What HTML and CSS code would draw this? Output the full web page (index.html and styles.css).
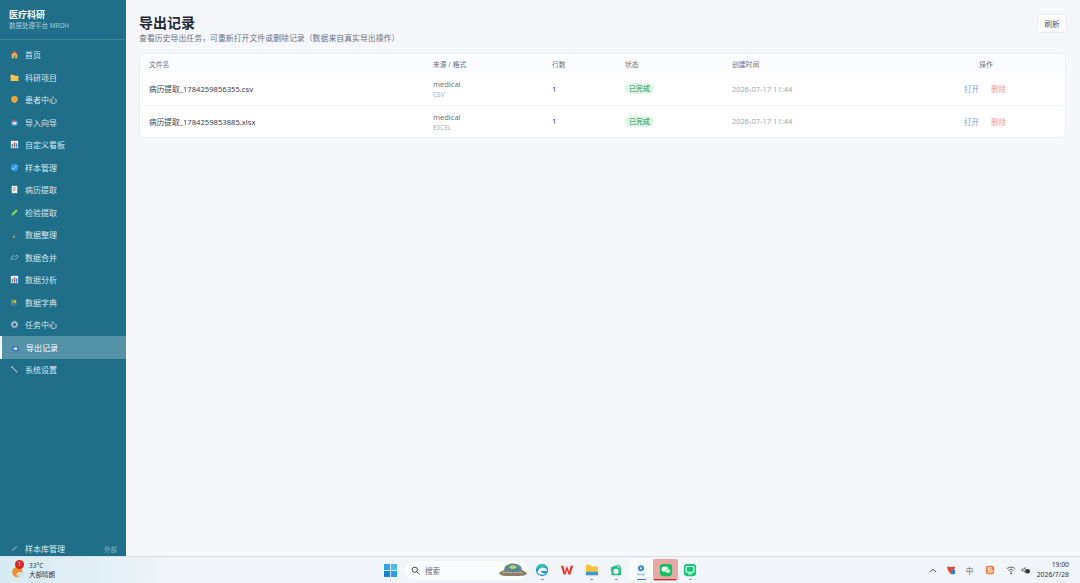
FILE: index.html
```html
<!DOCTYPE html>
<html lang="zh-CN">
<head>
<meta charset="utf-8">
<title>导出记录</title>
<link rel="stylesheet" href="styles.css">
</head>
<body>
<div class="app">
  <aside class="sidebar">
    <header class="brand">
      <div class="brand-name">医疗科研</div>
      <div class="brand-sub">数据处理平台 MRDH</div>
    </header>
    <nav class="nav">
      <a class="nav-item"><svg class="nav-icon" viewBox="0 0 16 16"><path d="M8 1.500 14.500 8H13v6.500H3V8H1.500z" fill="#e9b36a"/><path d="M8 1.500 14.500 8H12L8 4 4 8H1.500z" fill="#c9503f"/><rect x="6.500" y="9.500" width="3" height="5" fill="#5a8f4c"/></svg>首页</a>
      <a class="nav-item"><svg class="nav-icon" viewBox="0 0 16 16"><path d="M1 3h5.500l1.500 2h7v9H1z" fill="#f6c343"/></svg>科研项目</a>
      <a class="nav-item"><svg class="nav-icon" viewBox="0 0 16 16"><path d="M8 1.500 13.500 3.500v5c0 3-2.500 5-5.500 6-3-1-5.500-3-5.500-6v-5z" fill="#f2a93b"/><path d="M6 8h4M8 6v4" stroke="#e58a2c" stroke-width="1.300"/></svg>患者中心</a>
      <a class="nav-item"><svg class="nav-icon" viewBox="0 0 16 16"><rect x="2" y="4" width="12" height="10" rx="3" fill="#2f8fd8"/><rect x="4.500" y="6.500" width="7" height="5" rx="1.500" fill="#dfeef8"/><path d="M8 2v5M6 5l2 2.500L10 5" stroke="#e2574c" stroke-width="1.500" fill="none"/></svg>导入向导</a>
      <a class="nav-item"><svg class="nav-icon" viewBox="0 0 16 16"><rect x="1.500" y="1.500" width="13" height="13" fill="#e8f0f4"/><rect x="3" y="7" width="2.500" height="6.500" fill="#3aa76d"/><rect x="6.800" y="4" width="2.500" height="9.500" fill="#d9487d"/><rect x="10.500" y="6" width="2.500" height="7.500" fill="#3f86d8"/></svg>自定义看板</a>
      <a class="nav-item"><svg class="nav-icon" viewBox="0 0 16 16"><circle cx="8" cy="8" r="6.500" fill="#2e9be6"/><path d="M4 10.500c3-.5 5.500-2.500 8-5.500" stroke="#d9eefb" stroke-width="1.400" fill="none"/></svg>样本管理</a>
      <a class="nav-item"><svg class="nav-icon" viewBox="0 0 16 16"><rect x="3" y="1.500" width="10" height="13" fill="#eef1f3"/><path d="M5 5h6M5 7.500h6M5 10h4" stroke="#b07a5a" stroke-width="1"/></svg>病历提取</a>
      <a class="nav-item"><svg class="nav-icon" viewBox="0 0 16 16"><path d="M11 2l3 3-8 8-3.500.5L3 10z" fill="#8fd14f"/><path d="M3 10l3 3-3.500.5z" fill="#3d9b5c"/></svg>检验提取</a>
      <a class="nav-item"><svg class="nav-icon" viewBox="0 0 16 16"><path d="M12 5 8 10" stroke="#8a6a3a" stroke-width="1"/><path d="M8 9.500l1.500 1.500-2.500 3H4.500z" fill="#e8a33a"/></svg>数据整理</a>
      <a class="nav-item"><svg class="nav-icon" viewBox="0 0 16 16" fill="none" stroke="#b9cfd8" stroke-width="1.300"><path d="M7 9.500 5.500 11a2 2 0 0 1-3-3L5 5.500a2 2 0 0 1 3 0"/><path d="M9 6.500 10.500 5a2 2 0 0 1 3 3L11 10.500a2 2 0 0 1-3 0"/></svg>数据合并</a>
      <a class="nav-item"><svg class="nav-icon" viewBox="0 0 16 16"><rect x="1.500" y="1.500" width="13" height="13" fill="#e8f0f4"/><rect x="3" y="7" width="2.500" height="6.500" fill="#3aa76d"/><rect x="6.800" y="4" width="2.500" height="9.500" fill="#d9487d"/><rect x="10.500" y="6" width="2.500" height="7.500" fill="#3f86d8"/></svg>数据分析</a>
      <a class="nav-item"><svg class="nav-icon" viewBox="0 0 16 16"><rect x="2" y="2.500" width="5" height="10" fill="#57a84a"/><rect x="7" y="3.500" width="4" height="10" fill="#e2b23a"/><rect x="5" y="9" width="6" height="5" fill="#3c6fd0"/></svg>数据字典</a>
      <a class="nav-item"><svg class="nav-icon" viewBox="0 0 16 16"><circle cx="8" cy="8" r="4.300" fill="none" stroke="#a9bccb" stroke-width="3"/><circle cx="8" cy="8" r="6" fill="none" stroke="#a9bccb" stroke-width="1.400" stroke-dasharray="2 2"/></svg>任务中心</a>
      <a class="nav-item nav-item-active"><svg class="nav-icon" viewBox="0 0 16 16"><rect x="2.500" y="5.500" width="11" height="9" rx="1.500" fill="#2f78c4"/><rect x="5" y="8" width="6" height="4" fill="#dfeef8"/><path d="M8 1.500v5" stroke="#e2574c" stroke-width="2"/></svg>导出记录</a>
      <a class="nav-item"><svg class="nav-icon" viewBox="0 0 16 16"><path d="M3 3l3 3 7 7" stroke="#b5c5cc" stroke-width="1.800" fill="none"/><path d="M2 5l3-3" stroke="#b5c5cc" stroke-width="1.500"/></svg>系统设置</a>
    </nav>
    <footer class="side-foot">
      <svg class="nav-icon" viewBox="0 0 16 16"><path d="M11 3l2 2-7 7-3 1 1-3z" fill="#7f93a8"/></svg>
      <span class="side-foot-label">样本库管理</span>
      <span class="side-foot-tag">外部</span>
    </footer>
  </aside>

  <main class="main">
    <div class="page-head">
      <div>
        <h1 class="page-title">导出记录</h1>
        <p class="page-sub">查看历史导出任务，可重新打开文件或删除记录（数据来自真实导出操作）</p>
      </div>
      <button class="refresh">刷新</button>
    </div>
    <div class="card">
      <table class="table">
        <colgroup>
          <col class="c-file"><col class="c-src"><col class="c-rows"><col class="c-state"><col class="c-time"><col class="c-ops"><col>
        </colgroup>
        <thead>
          <tr><th>文件名</th><th>来源 / 格式</th><th>行数</th><th>状态</th><th>创建时间</th><th class="th-ops">操作</th><th></th></tr>
        </thead>
        <tbody>
          <tr>
            <td class="file">病历提取_1784259856355.csv</td>
            <td><div class="src">medical</div><div class="fmt">CSV</div></td>
            <td class="rows">1</td>
            <td><span class="badge">已完成</span></td>
            <td class="time">2026-07-17 11:44</td>
            <td class="ops"><a class="op-open">打开</a><a class="op-del">删除</a></td>
            <td></td>
          </tr>
          <tr>
            <td class="file">病历提取_1784259853885.xlsx</td>
            <td><div class="src">medical</div><div class="fmt">EXCEL</div></td>
            <td class="rows">1</td>
            <td><span class="badge">已完成</span></td>
            <td class="time">2026-07-17 11:44</td>
            <td class="ops"><a class="op-open">打开</a><a class="op-del">删除</a></td>
            <td></td>
          </tr>
        </tbody>
      </table>
    </div>
  </main>
</div>

<div class="taskbar">
  <div class="weather">
    <span class="weather-icon">
      <svg viewBox="0 0 20 20" width="16" height="16"><circle cx="8" cy="10" r="6.500" fill="#f0912c"/><ellipse cx="12" cy="13" rx="5" ry="3" fill="#d8dfe8"/></svg>
      <span class="weather-badge">1</span>
    </span>
    <div class="weather-text"><div>33°C</div><div>大部晴朗</div></div>
  </div>
  <div class="task-center">
    <svg class="start" viewBox="0 0 14 14"><rect width="6.500" height="6.500" fill="#2ea4ea"/><rect x="7.500" width="6.500" height="6.500" fill="#47b8f0"/><rect y="7.500" width="6.500" height="6.500" fill="#1583d8"/><rect x="7.500" y="7.500" width="6.500" height="6.500" fill="#2b9ce6"/></svg>
    <div class="search">
      <svg class="search-icon" viewBox="0 0 12 12" fill="none" stroke="#333" stroke-width="1.200"><circle cx="5" cy="5" r="3.500"/><path d="M7.500 7.500 11 11"/></svg>
      <span class="search-text">搜索</span>
      <svg class="search-art" viewBox="0 0 28 14"><path d="M0 10c2-2 4-2 5-3 1-4 5-6.500 9-6.500S22 3 23 7c1 1 3 1 5 3-1 3-4 3-14 3S1 13 0 10z" fill="#8d8069"/><ellipse cx="14" cy="5" rx="8.500" ry="4" fill="#4f8c9a"/><ellipse cx="14" cy="4" rx="3.500" ry="1.800" fill="#d9c770"/><path d="M4 9.500h20" stroke="#d0c4a8" stroke-width="1.200" stroke-dasharray="1.500 1"/></svg>
    </div>
    <div class="apps">
      <span class="app-slot"><svg viewBox="0 0 16 16"><circle cx="8" cy="8" r="7" fill="#1d8fd0"/><path d="M3 11c0-4 3-6 6-6 3 0 5 2 5 4H7c0 2 3 3.500 6 2-2 3-8 3.500-10 0z" fill="#eaf6fb"/><path d="M1.500 8C2 4 5 1 8 1c3.500 0 6 2 6.500 5-2-2.500-9-3-13 2z" fill="#36c2a6"/></svg><i class="dot"></i></span>
      <span class="app-slot"><svg viewBox="0 0 16 16"><path d="M1 3h3l1.500 7L8 3l2.500 7L12 3h3l-3 10H9.500L8 8l-1.500 5H4z" fill="#e33b2e"/></svg></span>
      <span class="app-slot"><svg viewBox="0 0 16 16"><path d="M1 2h5l1.500 2H15v10H1z" fill="#f5c33b"/><rect x="1" y="10" width="14" height="4" fill="#3d9ad6"/></svg><i class="dot"></i></span>
      <span class="app-slot"><svg viewBox="0 0 16 16"><path d="M2 5 11 1.500l3 4V14H3z" fill="#2fb889"/><circle cx="8" cy="9.500" r="3" fill="#eaf8f2"/><path d="M9 2 12 6" stroke="#fff"/></svg><i class="dot"></i></span>
      <span class="app-slot app-slot-open"><svg viewBox="0 0 16 16"><circle cx="8" cy="6" r="3.500" fill="#3b8ad0"/><path d="M3 11c2 2.500 8 2.500 10 0l-1 3H4z" fill="#7fb6e2"/><circle cx="8" cy="6" r="1.200" fill="#eaf4fb"/></svg><i class="bar-blue"></i></span>
      <span class="app-slot app-slot-active"><svg viewBox="0 0 16 16"><rect x="1" y="1" width="14" height="14" rx="3.500" fill="#12c15f"/><ellipse cx="6.800" cy="7" rx="3.800" ry="3.100" fill="#fff"/><ellipse cx="10" cy="9.200" rx="3" ry="2.400" fill="#fff" stroke="#12c15f" stroke-width=".7"/></svg><i class="bar-red"></i></span>
      <span class="app-slot"><svg viewBox="0 0 16 16"><rect x="1" y="1" width="14" height="14" rx="3.500" fill="#14c777"/><rect x="3.500" y="4" width="9" height="6.500" rx="1" fill="none" stroke="#fff" stroke-width="1.200"/><path d="M6 12.500h4" stroke="#fff" stroke-width="1.200"/></svg><i class="dot"></i></span>
    </div>
  </div>
  <div class="tray">
    <svg class="tray-chev" viewBox="0 0 10 6" fill="none" stroke="#333" stroke-width="1.100"><path d="M1 5 5 1.500 9 5"/></svg>
    <svg class="tray-icon" viewBox="0 0 12 12"><path d="M1 2h10L9.500 7 6 11 2.500 7z" fill="#dd4a3e"/><rect x="6" y="6" width="5" height="5" rx="1" fill="#2f7fd4"/></svg>
    <span class="tray-ime">中</span>
    <svg class="tray-icon tray-sogou" viewBox="0 0 12 12"><rect x="1" y="1" width="10" height="10" rx="2.500" fill="#ef7a3a"/><path d="M8.500 3.500h-5V6h5v2.500h-5" fill="none" stroke="#fff" stroke-width="1.200"/></svg>
    <svg class="tray-icon tray-wifi" viewBox="0 0 12 12" fill="none" stroke="#444" stroke-width="1"><path d="M1 4.500c3-2.500 7-2.500 10 0M3 6.500c2-1.500 4-1.500 6 0M4.700 8.300c1-.7 1.600-.7 2.600 0"/><circle cx="6" cy="10" r=".6" fill="#444"/></svg>
    <svg class="tray-icon tray-vol" viewBox="0 0 12 12"><path d="M1 5h2l2-2v6L3 7H1z" fill="none" stroke="#444" stroke-width=".9"/><circle cx="8" cy="7.500" r="2.800" fill="#333"/></svg>
    <div class="clock"><div>19:00</div><div>2026/7/28</div></div>
  </div>
</div>
</body>
</html>
```
FILE: styles.css
```css
* { box-sizing: border-box; }
html, body { margin: 0; height: 100%; }
body {
  width: 1080px;
  height: 583px;
  overflow: hidden;
  display: flex;
  flex-direction: column;
  background: #f5f7fb;
  font-family: "Noto Sans", "Noto Sans CJK SC", sans-serif;
}
.app { flex: 0 0 556px; display: flex; min-height: 0; }

/* sidebar */
.sidebar {
  flex: 0 0 126px;
  background: #1f6f8b;
  color: #dcebf0;
  display: flex;
  flex-direction: column;
}
.brand { height: 40px; padding: 8px 9px 0; border-bottom: 1px solid #3f839b; }
.brand-name { font-size: 9px; line-height: 13px; font-weight: 700; color: #fff; }
.brand-sub { font-size: 6.500px; line-height: 9px; color: #a5c8d4; }
.nav { padding-top: 3.500px; flex: 1; display: flex; flex-direction: column; }
.nav-item {
  height: 22.500px;
  flex: none;
  display: flex;
  align-items: center;
  gap: 6px;
  padding-left: 10px;
  font-size: 8px;
  color: #d5e6ec;
}
.nav-item-active {
  background: #5492a8;
  border-left: 2px solid #f2f7f9;
  padding-left: 9px;
  color: #fff;
}
.nav-icon { width: 9px; height: 9px; flex: none; }
.side-foot {
  height: 15px;
  margin-bottom: 0;
  display: flex;
  align-items: center;
  gap: 6px;
  padding: 0 9px 0 10px;
  font-size: 8px;
}
.side-foot-label { flex: 1; }
.side-foot-tag { font-size: 6.500px; color: #85b3c3; }

/* main */
.main { flex: 1; padding: 13px 14px 0 13px; min-width: 0; }
.page-head { display: flex; justify-content: space-between; align-items: flex-start; height: 40px; }
.page-title { margin: 0; font-size: 14px; line-height: 20px; font-weight: 700; color: #1f2937; }
.page-sub { margin: 0; font-size: 7.900px; line-height: 10px; color: #6b7280; }
.refresh {
  margin-top: 1px;
  margin-right: -1px;
  width: 30px;
  height: 19px;
  border: 1px solid #e8ebf0;
  border-radius: 4px;
  background: #fff;
  font: 7.500px "Noto Sans", "Noto Sans CJK SC", sans-serif;
  color: #4b5563;
  padding: 0;
}
.card {
  background: #fff;
  border: 1px solid #e9edf3;
  border-radius: 6px;
  overflow: hidden;
}
.table { width: 100%; border-collapse: collapse; table-layout: fixed; }
.c-file { width: 284px; }
.c-src { width: 119px; }
.c-rows { width: 73px; }
.c-state { width: 107px; }
.c-time { width: 232px; }
.c-ops { width: 62px; }
th {
  height: 19px;
  padding: 0 0 0 9px;
  background: #fbfcfd;
  font-size: 6.800px;
  font-weight: 400;
  text-align: left;
  color: #6b7280;
}
.th-ops { text-align: center; padding: 0; }
td { height: 32px; padding: 0 0 0 9px; border-top: 1px solid #f3f5f8; font-size: 7.500px; color: #374151; }
thead + tbody tr:first-child td { border-top: 0; }
.file { color: #374151; font-size: 7.650px; }
.src { margin-top: 1px; font-size: 7.500px; line-height: 12px; color: #6b7280; }
.fmt { font-size: 6.500px; line-height: 10px; color: #a3aab5; }
.badge {
  display: inline-block;
  padding: 0 4px;
  height: 11px;
  line-height: 11px;
  border-radius: 6px;
  background: #dcf5e4;
  color: #2f8f57;
  font-size: 7px;
}
.time { color: #a0a6b1; }
.ops { white-space: nowrap; }
.op-open { color: #7a9bea; }
.op-del { color: #f09a9a; margin-left: 12px; }

/* taskbar */
.taskbar {
  flex: 0 0 27px;
  display: flex;
  align-items: center;
  border-top: 1px solid #d9dde2;
  background: linear-gradient(90deg, #d6ebf3 0, #e6f1f6 130px, #f1f4f8 170px, #f1f4f8 100%);
  color: #222;
}
.weather { flex: 0 0 384px; display: flex; align-items: center; gap: 4px; padding-left: 11px; }
.weather-icon { position: relative; width: 14px; height: 16px; display: block; margin-top: 1px; }
.weather-badge {
  position: absolute;
  left: 4px;
  top: -3px;
  width: 9px;
  height: 9px;
  border-radius: 50%;
  background: #d9291f;
  color: #fff;
  font-size: 6px;
  line-height: 9px;
  text-align: center;
}
.weather-text { font-size: 6.500px; line-height: 9px; color: #333; }
.task-center { display: flex; align-items: center; }
.start { width: 13px; height: 13px; flex: none; }
.search {
  margin-left: 8px;
  width: 123px;
  height: 18px;
  border-radius: 9px;
  background: #fbfcfd;
  display: flex;
  align-items: center;
  padding: 0 1px 0 6px;
}
.search-icon { width: 9px; height: 9px; flex: none; }
.search-text { margin-left: 5px; flex: 1; font-size: 7.500px; color: #666; }
.search-art { width: 28px; height: 14px; flex: none; }
.apps { display: flex; margin-left: 2px; }
.app-slot {
  position: relative;
  width: 24.700px;
  height: 22px;
  display: flex;
  align-items: center;
  justify-content: center;
  border-radius: 2px;
}
.app-slot svg { width: 14px; height: 14px; }
.app-slot-open { background: #f8fafc; }
.app-slot-active { background: #e5aaa4; }
.dot { position: absolute; bottom: 1px; left: 11px; width: 3px; height: 1.500px; background: #8a8f96; border-radius: 1px; }
.bar-blue { position: absolute; bottom: 1px; left: 8px; width: 9px; height: 1.500px; background: #2c7fd0; }
.bar-red { position: absolute; bottom: 1px; left: 1px; width: 22px; height: 1.500px; background: #c0302a; }
.tray { flex: 1; display: flex; align-items: center; padding: 0 11px 0 0; justify-content: flex-end; }
.tray-chev { width: 8px; height: 5px; margin-right: 9px; }
.tray-icon { width: 10px; height: 10px; flex: none; }
.tray-ime { margin-left: 10px; font-size: 7.500px; color: #666; width: 9px; }
.tray-sogou { margin-left: 10px; }
.tray-wifi { margin-left: 11px; }
.tray-vol { margin-left: 5px; }
.clock { margin-left: 6px; font-size: 6.800px; line-height: 10px; text-align: right; color: #333; }
```
